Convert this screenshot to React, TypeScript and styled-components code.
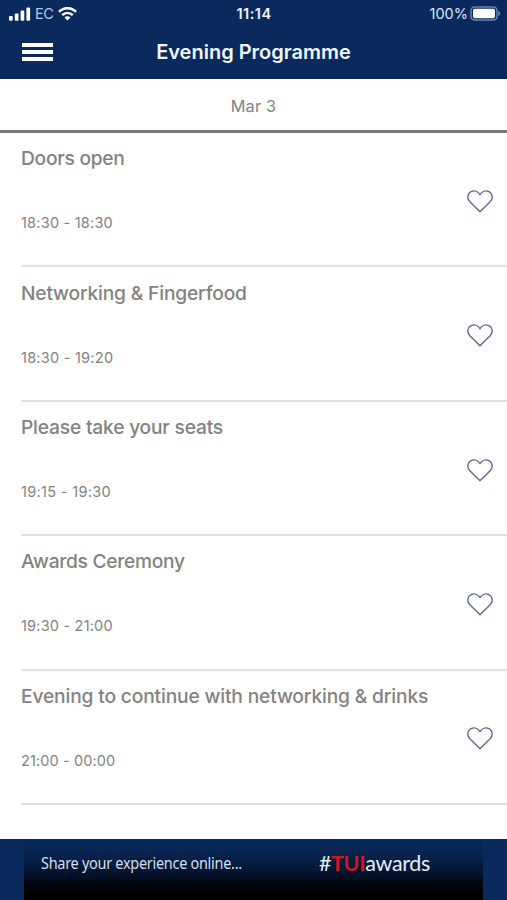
import React from "react";
import styled, { createGlobalStyle } from "styled-components";

const NAVY = "#0a2a5e";

const GlobalStyle = createGlobalStyle`
  *, *::before, *::after { box-sizing: border-box; }
  body { margin: 0; background: #fff; overflow: hidden; }
  button { display: block; background: none; border: 0; padding: 0; }
  svg { display: block; }
`;

const Screen = styled.div`
  display: flex;
  flex-direction: column;
  width: 507px;
  height: 900px;
  background: #fff;
  font-family: Inter, "Liberation Sans", sans-serif;
  color: #828282;
`;

const Header = styled.header`
  flex: none;
  height: 79.4px;
  background: ${NAVY};
  color: #f1f5fc;
`;

const StatusBar = styled.div`
  display: grid;
  grid-template-columns: 1fr auto 1fr;
  align-items: center;
  height: 27px;
  padding: 0 6px 0 9px;
`;

const StatusGroup = styled.div<{ $end?: boolean }>`
  display: flex;
  align-items: center;
  justify-content: ${(p) => (p.$end ? "flex-end" : "flex-start")};
  gap: ${(p) => (p.$end ? 2 : 4)}px;
`;

const StatusText = styled.span<{ $spacing: number; $color?: string }>`
  font-size: 14.5px;
  line-height: 20px;
  letter-spacing: ${(p) => p.$spacing}px;
  color: ${(p) => p.$color ?? "#dce5f4"};
`;

const Clock = styled.span`
  margin-left: -2px;
  font-size: 14.5px;
  font-weight: 600;
  line-height: 20px;
  letter-spacing: 0.5px;
`;

const NavBar = styled.div`
  display: grid;
  grid-template-columns: 54px 1fr 54px;
  align-items: center;
  height: 50px;
`;

const MenuButton = styled.button`
  display: flex;
  flex-direction: column;
  gap: 3.4px;
  width: 31px;
  margin-left: 22px;
`;

const MenuLine = styled.span`
  height: 4px;
  background: #fff;
`;

const Title = styled.h1`
  margin: 0;
  text-align: center;
  font-size: 20px;
  font-weight: 600;
  line-height: 26px;
`;

const DateTab = styled.div`
  flex: none;
  display: flex;
  align-items: center;
  justify-content: center;
  height: 53.2px;
  padding-top: 3px;
  border-bottom: 3px solid #7b7b7b;
  font-size: 16.3px;
  letter-spacing: 0.2px;
`;

const Sessions = styled.ul`
  flex: 1;
  margin: 0;
  padding: 0.5px 0 0 21px;
  list-style: none;
`;

const Session = styled.li`
  display: flex;
  align-items: center;
  justify-content: space-between;
  height: 134.4px;
  padding: 2px 14px 0 0;
  border-bottom: 2px solid #e0e0e0;
`;

const SessionInfo = styled.div`
  display: flex;
  flex-direction: column;
  gap: 42px;
  margin-top: -22px;
`;

const SessionName = styled.span<{ $spacing: number }>`
  font-size: 19.2px;
  font-weight: 500;
  line-height: 26px;
  letter-spacing: ${(p) => p.$spacing}px;
  white-space: nowrap;
`;

const SessionTime = styled.time<{ $spacing: number }>`
  font-size: 14.5px;
  line-height: 20px;
  letter-spacing: ${(p) => p.$spacing}px;
`;

const FavouriteButton = styled.button`
  margin-top: 2px;
`;

const Footer = styled.footer`
  flex: none;
  height: 61px;
  padding: 0 24px;
  background: ${NAVY};
`;

const Banner = styled.div`
  display: flex;
  height: 100%;
  padding: 12px 53px 0 17px;
  justify-content: space-between;
  background: linear-gradient(#09295c 0%, #082551 22%, #041736 50%, #010814 72%, #000 88%);
  color: #d4deee;
`;

const BannerText = styled.span`
  font-family: "Noto Sans", "Open Sans", sans-serif;
  font-size: 15.8px;
  line-height: 24px;
  letter-spacing: -0.3px;
  white-space: nowrap;
  transform: scaleX(0.915);
  transform-origin: left;
`;

const HashTag = styled.span`
  font-family: Lato, sans-serif;
  font-size: 21.5px;
  line-height: 24px;
  letter-spacing: -0.35px;
  color: #e6edf8;
`;

const Brand = styled.span`
  font-weight: 700;
  color: #d5141f;
`;

const SignalIcon = () => (
  <svg width="22" height="14" viewBox="0 0 22 14" fill="#fff">
    <rect x="0" y="9" width="3.7" height="4.7" rx="1" />
    <rect x="5.8" y="6.6" width="3.7" height="7.1" rx="1" />
    <rect x="11.6" y="3.5" width="3.7" height="10.2" rx="1" />
    <rect x="17.4" y="0.5" width="3.7" height="13.2" rx="1" />
  </svg>
);

const WifiIcon = () => (
  <svg width="19" height="14" viewBox="0 0 19 14" fill="none" stroke="#fff" strokeWidth="2.5">
    <path d="M1 4.9C6 0 13 0 18 4.9" />
    <path d="M4.2 8.2C7.3 5.3 11.7 5.3 14.8 8.2" />
    <path d="M6.5 10.4C8.2 8.8 10.8 8.8 12.5 10.4L9.5 13.5Z" fill="#fff" stroke="none" />
  </svg>
);

const BatteryIcon = () => (
  <svg width="31" height="15" viewBox="0 0 31 15">
    <rect x="1" y="1" width="26" height="13" rx="3.5" fill="none" stroke="#6d83a9" strokeWidth="1.5" />
    <rect x="3" y="2.8" width="22" height="9.4" rx="1.8" fill="#fff" />
    <path d="M28.3 5C30.7 5.8 30.7 9.2 28.3 10Z" fill="#7b90b3" />
  </svg>
);

const HeartIcon = () => (
  <svg width="26" height="23" viewBox="0 0 26 23" fill="none" stroke="#5b6898" strokeWidth="1.4" strokeLinejoin="round">
    <path d="M13 21.7L2.6 11.4C-.3 8.2.5 3.4 4 1.7C7.4 0 11.1 1.4 13 4.7C14.9 1.4 18.6 0 22 1.7C25.5 3.4 26.3 8.2 23.4 11.4Z" />
  </svg>
);

const sessions = [
  { name: "Doors open", time: "18:30 - 18:30", ns: -0.25, ts: 0.22 },
  { name: "Networking & Fingerfood", time: "18:30 - 19:20", ns: -0.17, ts: 0.25 },
  { name: "Please take your seats", time: "19:15 - 19:30", ns: -0.19, ts: 0.33 },
  { name: "Awards Ceremony", time: "19:30 - 21:00", ns: -0.28, ts: 0.2 },
  { name: "Evening to continue with networking & drinks", time: "21:00 - 00:00", ns: -0.15, ts: 0.12 },
];

export default function App() {
  return (
    <Screen>
      <GlobalStyle />
      <Header>
        <StatusBar>
          <StatusGroup>
            <SignalIcon />
            <StatusText $spacing={-0.4} $color="#b9c8e2">EC</StatusText>
            <WifiIcon />
          </StatusGroup>
          <Clock>11:14</Clock>
          <StatusGroup $end>
            <StatusText $spacing={0}>100%</StatusText>
            <BatteryIcon />
          </StatusGroup>
        </StatusBar>
        <NavBar>
          <MenuButton aria-label="Menu">
            <MenuLine />
            <MenuLine />
            <MenuLine />
          </MenuButton>
          <Title>Evening Programme</Title>
        </NavBar>
      </Header>
      <DateTab>Mar 3</DateTab>
      <Sessions>
        {sessions.map((s) => (
          <Session key={s.name}>
            <SessionInfo>
              <SessionName $spacing={s.ns}>{s.name}</SessionName>
              <SessionTime $spacing={s.ts}>{s.time}</SessionTime>
            </SessionInfo>
            <FavouriteButton aria-label="Add to favourites">
              <HeartIcon />
            </FavouriteButton>
          </Session>
        ))}
      </Sessions>
      <Footer>
        <Banner>
          <BannerText>Share your experience online...</BannerText>
          <HashTag>
            #<Brand>TUI</Brand>awards
          </HashTag>
        </Banner>
      </Footer>
    </Screen>
  );
}
